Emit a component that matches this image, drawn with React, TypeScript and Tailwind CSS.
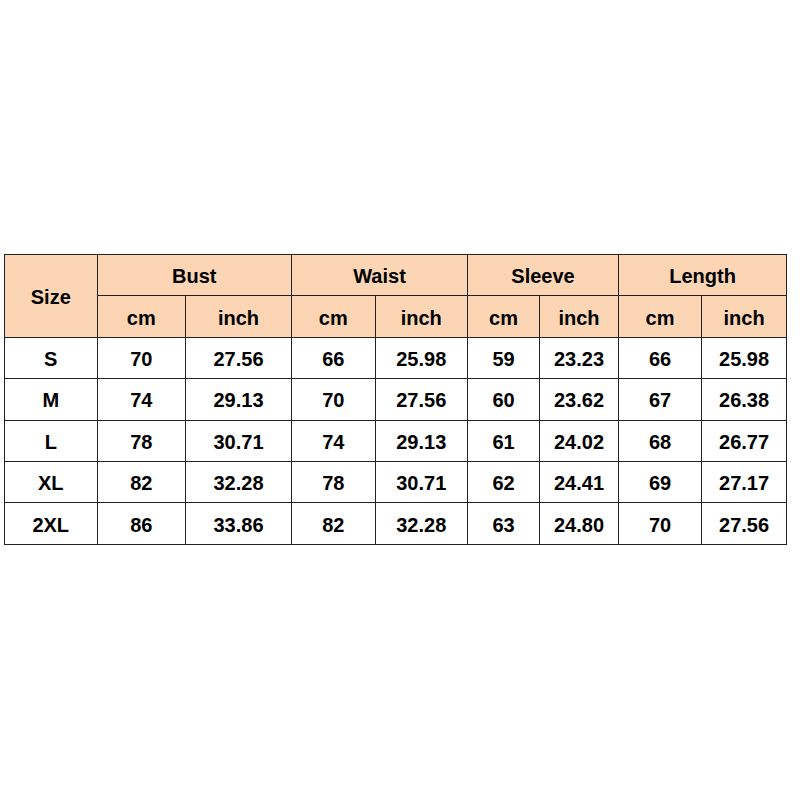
const cols = [92.5, 88.5, 106, 83.5, 92.5, 72, 79, 83, 85];

const groups = ["Bust", "Waist", "Sleeve", "Length"];

const rows: string[][] = [
  ["S", "70", "27.56", "66", "25.98", "59", "23.23", "66", "25.98"],
  ["M", "74", "29.13", "70", "27.56", "60", "23.62", "67", "26.38"],
  ["L", "78", "30.71", "74", "29.13", "61", "24.02", "68", "26.77"],
  ["XL", "82", "32.28", "78", "30.71", "62", "24.41", "69", "27.17"],
  ["2XL", "86", "33.86", "82", "32.28", "63", "24.80", "70", "27.56"],
];

const cell = "border border-[#222] text-center align-middle p-0 pt-[2px]";

export default function App() {
  return (
    <div className="w-[800px] h-[800px] bg-white pt-[254px] pl-[4px] font-['Liberation_Sans',Arial,sans-serif] text-[20px] font-bold text-black">
      <table className="border-collapse table-fixed w-[782px]">
        <colgroup>
          {cols.map((w, i) => (
            <col key={i} style={{ width: w }} />
          ))}
        </colgroup>
        <thead>
          <tr className="h-[41.4px] bg-[#fcd5b4]">
            <th rowSpan={2} className={cell}>
              Size
            </th>
            {groups.map((g) => (
              <th key={g} colSpan={2} className={cell}>
                {g}
              </th>
            ))}
          </tr>
          <tr className="h-[41.4px] bg-[#fcd5b4]">
            {groups.map((g) => [
              <th key={g + "cm"} className={cell}>
                cm
              </th>,
              <th key={g + "in"} className={cell}>
                inch
              </th>,
            ])}
          </tr>
        </thead>
        <tbody>
          {rows.map((r) => (
            <tr key={r[0]} className="h-[41.4px]">
              {r.map((v, i) => (
                <td key={i} className={cell}>
                  {v}
                </td>
              ))}
            </tr>
          ))}
        </tbody>
      </table>
    </div>
  );
}
